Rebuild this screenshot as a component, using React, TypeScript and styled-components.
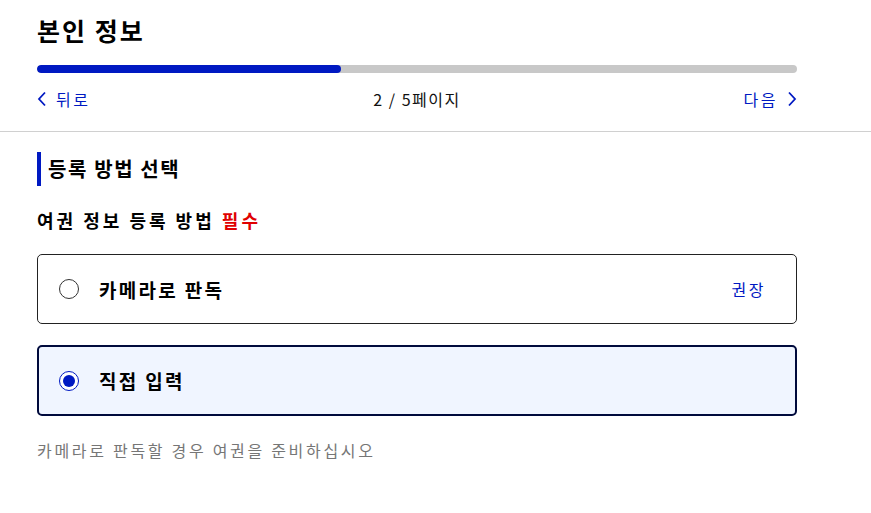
import React from "react";
import styled, { createGlobalStyle } from "styled-components";

const Global = createGlobalStyle`
  html, body { margin: 0; padding: 0; background: #fff; }
  body { font-family: "Noto Sans CJK KR", "Noto Sans", sans-serif; color: #000; }
  * { box-sizing: border-box; }
`;

const Page = styled.div`
  width: 871px;
  display: flex;
  flex-direction: column;
`;

const Header = styled.header`
  padding: 10px 74px 0 37px;
  border-bottom: 1px solid #d0d0d0;
`;

const Title = styled.h1`
  margin: 0;
  font-size: 25px;
  font-weight: 700;
  line-height: 40px;
  letter-spacing: 2px;
`;

const Track = styled.div`
  margin-top: 15px;
  height: 8px;
  border-radius: 4px;
  background: #c8c8c8;
  overflow: hidden;
`;

const Fill = styled.div`
  height: 100%;
  background: #0019c2;
  border-radius: 4px;
`;

const NavRow = styled.nav`
  display: grid;
  grid-template-columns: 1fr auto 1fr;
  align-items: center;
  height: 52px;
  margin-bottom: 6px;
  font-size: 16px;
`;

const NavLink = styled.a<{ $end?: boolean }>`
  display: flex;
  align-items: center;
  gap: 9px;
  color: #0019c2;
  text-decoration: none;
  letter-spacing: 2.5px;
  justify-self: ${(p) => (p.$end ? "end" : "start")};
`;

const PageCount = styled.span`
  color: #111;
  letter-spacing: 1.5px;
`;

const Main = styled.main`
  padding: 20px 74px 0 37px;
  display: flex;
  flex-direction: column;
`;

const SectionTitle = styled.h2`
  margin: 0;
  border-left: 4px solid #0019c2;
  padding-left: 7px;
  font-size: 20px;
  font-weight: 700;
  line-height: 34px;
  letter-spacing: 1.6px;
`;

const Question = styled.h3`
  margin: 19px 0 0;
  font-size: 18px;
  font-weight: 700;
  line-height: 30px;
  letter-spacing: 3px;
`;

const Required = styled.span`
  color: #e00000;
  font-weight: 700;
`;

const Options = styled.div`
  margin-top: 19px;
  display: flex;
  flex-direction: column;
  gap: 21px;
`;

const Card = styled.label<{ $checked?: boolean }>`
  display: flex;
  align-items: center;
  height: ${(p) => (p.$checked ? 71 : 70)}px;
  padding: 0 30px 0 ${(p) => (p.$checked ? 20 : 21)}px;
  border: ${(p) => (p.$checked ? "2px solid #000a3c" : "1px solid #222")};
  border-radius: 5px;
  background: ${(p) => (p.$checked ? "#f0f5ff" : "#fff")};
  cursor: pointer;
`;

const Radio = styled.span<{ $checked?: boolean }>`
  width: 20px;
  height: 20px;
  border-radius: 50%;
  border: 1.5px solid ${(p) => (p.$checked ? "#0019c2" : "#333")};
  background: #fff;
  display: flex;
  align-items: center;
  justify-content: center;
  flex: none;
  &::after {
    content: "";
    width: 12px;
    height: 12px;
    border-radius: 50%;
    background: ${(p) => (p.$checked ? "#0019c2" : "transparent")};
  }
`;

const OptionLabel = styled.span`
  margin-left: 20px;
  font-size: 19px;
  font-weight: 700;
  letter-spacing: 2.3px;
  flex: 1;
`;

const Tag = styled.span`
  color: #0019c2;
  font-size: 16px;
  letter-spacing: 2.5px;
`;

const Hint = styled.p`
  margin: 22px 0 0;
  color: #767676;
  font-size: 16px;
  line-height: 24px;
  letter-spacing: 2.7px;
`;

const Chevron = ({ dir }: { dir: "left" | "right" }) => (
  <svg width="10" height="16" viewBox="0 0 10 16" fill="none">
    <path
      d={dir === "left" ? "M8 1.5L2 8l6 6.5" : "M2 1.5L8 8l-6 6.5"}
      stroke="#0019c2"
      strokeWidth="1.8"
    />
  </svg>
);

export default function App() {
  const progress = 40;
  return (
    <Page>
      <Global />
      <Header>
        <Title>본인 정보</Title>
        <Track>
          <Fill style={{ width: `${progress}%` }} />
        </Track>
        <NavRow>
          <NavLink href="#">
            <Chevron dir="left" />
            뒤로
          </NavLink>
          <PageCount>2 / 5페이지</PageCount>
          <NavLink href="#" $end>
            다음
            <Chevron dir="right" />
          </NavLink>
        </NavRow>
      </Header>
      <Main>
        <SectionTitle>등록 방법 선택</SectionTitle>
        <Question>
          여권 정보 등록 방법 <Required>필수</Required>
        </Question>
        <Options>
          <Card>
            <Radio />
            <OptionLabel>카메라로 판독</OptionLabel>
            <Tag>권장</Tag>
          </Card>
          <Card $checked>
            <Radio $checked />
            <OptionLabel>직접 입력</OptionLabel>
          </Card>
        </Options>
        <Hint>카메라로 판독할 경우 여권을 준비하십시오</Hint>
      </Main>
    </Page>
  );
}
